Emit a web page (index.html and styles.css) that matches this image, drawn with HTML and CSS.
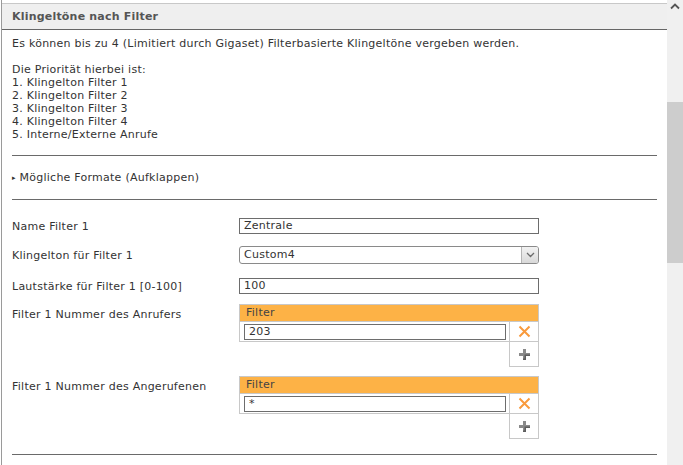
FILE: index.html
```html
<!DOCTYPE html>
<html lang="de">
<head>
<meta charset="utf-8">
<link rel="stylesheet" href="styles.css">
</head>
<body>
<div class="page">
  <div class="main">
    <div class="head">Klingeltöne nach Filter</div>
    <div class="content">
      <p class="intro">Es können bis zu 4 (Limitiert durch Gigaset) Filterbasierte Klingeltöne vergeben werden.</p>
      <p class="prio">Die Priorität hierbei ist:<br>1. Klingelton Filter 1<br>2. Klingelton Filter 2<br>3. Klingelton Filter 3<br>4. Klingelton Filter 4<br>5. Interne/Externe Anrufe</p>
      <div class="rule"></div>
      <div class="toggle"><span class="tri">&#9656;</span> Mögliche Formate (Aufklappen)</div>
      <div class="rule"></div>
      <div class="form">
        <div class="row r1">
          <div class="label">Name Filter 1</div>
          <div class="field"><div class="input">Zentrale</div></div>
        </div>
        <div class="row r2">
          <div class="label">Klingelton für Filter 1</div>
          <div class="field">
            <div class="select"><span class="sel-text">Custom4</span><span class="sel-btn"><svg width="9" height="6" viewBox="0 0 9 6"><path d="M1 1 L4.5 4.5 L8 1" fill="none" stroke="#6b6b6b" stroke-width="1.3"/></svg></span></div>
          </div>
        </div>
        <div class="row r3">
          <div class="label">Lautstärke für Filter 1 [0-100]</div>
          <div class="field"><div class="input">100</div></div>
        </div>
        <div class="row r4">
          <div class="label tl">Filter 1 Nummer des Anrufers</div>
          <div class="field">
            <div class="ftable">
              <div class="fhead">Filter</div>
              <div class="frow">
                <div class="fcell"><div class="finput">203</div></div>
                <div class="icell"><svg width="13" height="13" viewBox="0 0 13 13"><path d="M1.5 1.5 L11.5 11.5 M11.5 1.5 L1.5 11.5" stroke="#f99a3c" stroke-width="2"/></svg></div>
              </div>
              <div class="frow add">
                <div class="fspace"></div>
                <div class="icell plus"><svg width="13" height="13" viewBox="0 0 13 13"><path d="M5 1 H8 V5 H12 V8 H8 V12 H5 V8 H1 V5 H5 Z" fill="#8a8a8a"/><path d="M8 8 V12 H5 V10.5 H6.5 V6.5 H12 V8 Z" fill="#5e5e5e"/></svg></div>
              </div>
            </div>
          </div>
        </div>
        <div class="row r5">
          <div class="label tl">Filter 1 Nummer des Angerufenen</div>
          <div class="field">
            <div class="ftable">
              <div class="fhead">Filter</div>
              <div class="frow">
                <div class="fcell"><div class="finput">*</div></div>
                <div class="icell"><svg width="13" height="13" viewBox="0 0 13 13"><path d="M1.5 1.5 L11.5 11.5 M11.5 1.5 L1.5 11.5" stroke="#f99a3c" stroke-width="2"/></svg></div>
              </div>
              <div class="frow add">
                <div class="fspace"></div>
                <div class="icell plus"><svg width="13" height="13" viewBox="0 0 13 13"><path d="M5 1 H8 V5 H12 V8 H8 V12 H5 V8 H1 V5 H5 Z" fill="#8a8a8a"/><path d="M8 8 V12 H5 V10.5 H6.5 V6.5 H12 V8 Z" fill="#5e5e5e"/></svg></div>
              </div>
            </div>
          </div>
        </div>
      </div>
      <div class="rule last"></div>
    </div>
  </div>
  <div class="scroll">
    <div class="arrow"><svg width="10" height="7" viewBox="0 0 10 7"><path d="M1 5.5 L5 1.5 L9 5.5" fill="none" stroke="#555" stroke-width="1.8"/></svg></div>
    <div class="thumb"></div>
  </div>
</div>
</body>
</html>
```

FILE: styles.css
```css
html, body {
  margin: 0;
  padding: 0;
  background: #fff;
}
body {
  font-family: "DejaVu Sans", Verdana, sans-serif;
  font-size: 11px;
  letter-spacing: 0.25px;
  color: #333;
  overflow: hidden;
}
.page {
  display: flex;
  height: 465px;
}
.main {
  flex: 1;
  margin-left: 1px;
  border-left: 1px solid #9a9a9a;
  padding-top: 3px;
  min-width: 0;
}
.head {
  border-top: 1px solid #c8c8c8;
  border-bottom: 1px solid #666;
  background: #efefef;
  height: 25px;
  line-height: 25px;
  padding-left: 10px;
  font-weight: bold;
  letter-spacing: 0.2px;
  color: #555;
}
.content {
  padding: 0 10px 0 10px;
}
.intro {
  margin: 7px 0 0;
  line-height: 13px;
}
.prio {
  margin: 13px 0 0;
  line-height: 13px;
}
.rule {
  border-top: 1px solid #6a6a6a;
  margin-top: 14px;
}
.toggle {
  margin-top: 15px;
  line-height: 13px;
  height: 13px;
}
.toggle + .rule {
  margin-top: 15px;
}
.tri {
  font-size: 7px;
  display: inline-block;
  vertical-align: 1px;
}
.form {
  padding-top: 17px;
}
.row {
  display: grid;
  grid-template-columns: 227px 300px;
  align-items: start;
}
.label {
  line-height: 18px;
  padding-top: 1px;
}
.label.tl {
  padding-top: 2px;
}
.r1 { height: 29px; }
.r2 { height: 31px; }
.r3 { height: 27px; }
.r4 { height: 72px; }
.input {
  box-sizing: border-box;
  height: 16px;
  border: 1px solid #6d6d6d;
  padding-left: 4px;
  line-height: 14px;
  color: #333;
  margin-top: 1px;
}
.select {
  box-sizing: border-box;
  height: 18px;
  border: 1px solid #8a8a8a;
  border-radius: 3px;
  display: flex;
  align-items: stretch;
  overflow: hidden;
}
.sel-text {
  flex: 1;
  padding-left: 4px;
  line-height: 16px;
}
.sel-btn {
  width: 16px;
  border-left: 1px solid #b5b5b5;
  background: linear-gradient(#f2f2f2, #d9d9d9);
  display: flex;
  align-items: center;
  justify-content: center;
}
.ftable {
  box-sizing: border-box;
  width: 300px;
}
.fhead {
  box-sizing: border-box;
  background: #fdb246;
  border: 1px solid #c8c8c8;
  border-bottom: none;
  height: 17px;
  line-height: 16px;
  padding-left: 6px;
  color: #444;
}
.frow {
  display: flex;
}
.fcell {
  box-sizing: border-box;
  flex: 1;
  border: 1px solid #c8c8c8;
  border-right: none;
  height: 21px;
  padding: 2px 3px 0 4px;
}
.finput {
  box-sizing: border-box;
  height: 16px;
  border: 1px solid #6d6d6d;
  padding-left: 4px;
  line-height: 14px;
}
.icell {
  box-sizing: border-box;
  width: 30px;
  height: 21px;
  border: 1px solid #c8c8c8;
  display: flex;
  align-items: center;
  justify-content: center;
}
.add .fspace {
  flex: 1;
}
.add .icell {
  border-top: none;
  height: 25px;
}
.rule.last {
  margin-top: 15px;
}
.scroll {
  width: 16px;
  background: #f0f0f0;
  position: relative;
}
.arrow {
  height: 16px;
  display: flex;
  justify-content: center;
  padding-top: 3px;
  box-sizing: border-box;
}
.thumb {
  position: absolute;
  left: 0;
  right: 0;
  top: 102px;
  height: 161px;
  background: #cdcdcd;
}
```
